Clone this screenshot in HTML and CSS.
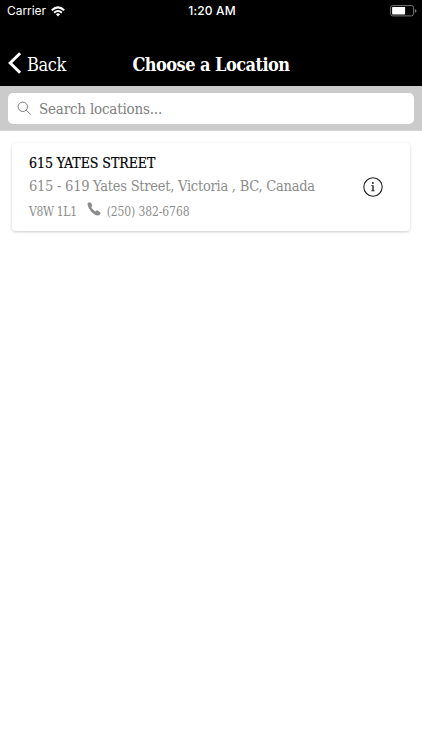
FILE: index.html
```html
<!DOCTYPE html>
<html lang="en">
<head>
<meta charset="utf-8">
<title>Choose a Location</title>
<link rel="stylesheet" href="styles.css">
</head>
<body>
<header class="header">
  <div class="status">
    <div class="carrier"><span>Carrier</span>
      <svg class="wifi" width="14" height="11" viewBox="0 0 14 11" fill="none" stroke="#fff" stroke-width="2"><path d="M.8 4.2Q7-1.5 13.2 4.2M3.1 6.7Q7 3.2 10.9 6.7"/><path d="M4.9 8.2Q7 6.5 9.1 8.2L7 10.4Z" fill="#fff" stroke="none"/></svg>
    </div>
    <time class="clock">1:20 AM</time>
    <svg class="battery" width="27" height="12" viewBox="0 0 27 12"><rect x=".6" y=".6" width="23" height="10.3" rx="2.2" fill="none" stroke="#777"/><rect x="2.1" y="2" width="13" height="7.4" rx=".6" fill="#fff"/><path d="M24.9 3.9Q26.5 4.3 26.5 5.8T24.9 7.7Z" fill="#777"/></svg>
  </div>
  <nav class="nav">
    <a class="back"><svg width="14" height="22" viewBox="0 0 14 22" fill="none" stroke="#fff" stroke-width="3"><path d="M12.1 1.2L2.2 11L12.1 20.8"/></svg><span class="back-label">Back</span></a>
    <h1 class="title">Choose a Location</h1>
  </nav>
</header>
<div class="search-bar">
  <div class="search">
    <svg width="15" height="15" viewBox="0 0 15 15" fill="none" stroke="#808080" stroke-width="1"><circle cx="5.8" cy="5.8" r="4.7"/><path d="M9.2 9.2L13.7 13.5"/></svg>
    <span class="placeholder">Search locations...</span>
  </div>
</div>
<main class="locations">
  <article class="card">
    <div class="details">
      <h2 class="name">615 YATES STREET</h2>
      <p class="address">615 - 619 Yates Street, Victoria , BC, Canada</p>
      <div class="contact"><span class="postal">V8W 1L1</span>
        <svg class="phone" width="14" height="14" viewBox="0 0 14 14"><path d="M.5 2.3Q.3 1 1.5.6L2.6.3Q3.5.3 4 1.1L5.2 3Q5.6 3.9 4.7 4.6Q4.1 5.1 4.5 5.8Q5.8 7.8 7.7 9.1Q8.5 9.7 9 9Q9.7 8 10.6 8.5L12.9 9.9Q13.8 10.6 13.5 11.4Q12.9 13.3 11 13.4Q8.1 13.4 4.5 9.9Q.8 6.1.5 2.3Z" fill="#8c8c8c"/></svg>
        <span class="number">(250) 382-6768</span></div>
    </div>
    <svg class="info" width="20" height="20" viewBox="0 0 20 20"><circle cx="10" cy="10" r="9.2" fill="none" stroke="#222" stroke-width="1.1"/><circle cx="9.9" cy="6" r="1" fill="#222"/><path d="M8.2 8.3H10.7V13.6H11.8V14.3H8.2V13.6H9.3V9H8.2Z" fill="#222"/></svg>
  </article>
</main>
</body>
</html>
```
FILE: styles.css
```css
* { box-sizing: border-box; }
body {
  display: flex;
  flex-direction: column;
  min-height: 100vh;
  margin: 0;
  background: #fff;
  font-family: "Roboto Slab", "DejaVu Serif Condensed", "DejaVu Serif", serif;
  font-stretch: condensed;
  white-space: nowrap;
}
h1, h2, p { margin: 0; }
svg { display: block; flex: none; }
.header { height: 86px; background: #000; color: #fff; }
.status {
  display: grid;
  grid-template-columns: 1fr auto 1fr;
  align-items: center;
  height: 22px;
  padding: 0 5px 0 7px;
  font: 12px/22px Inter, sans-serif;
}
.carrier { display: flex; align-items: center; gap: 5px; letter-spacing: -.05px; }
.clock { font-weight: 500; letter-spacing: .15px; }
.battery { justify-self: end; }
.nav {
  display: grid;
  grid-template-columns: 1fr auto 1fr;
  align-items: center;
  height: 42px;
  margin-top: 20px;
  padding: 0 8px;
}
.back { display: flex; align-items: center; gap: 5px; font-size: 18px; letter-spacing: -.4px; }
.back-label { padding-top: 2px; }
.title { padding-top: 2px; font-size: 18px; font-weight: 700; letter-spacing: -.54px; }
.search-bar { height: 45px; padding: 7px 8px; background: #cbcbcb; border-bottom: 1px solid #d5d5d5; }
.search {
  display: flex;
  align-items: center;
  gap: 7px;
  height: 31px;
  padding-left: 9px;
  border-radius: 5px;
  background: #fff;
  color: #808080;
  font-size: 15px;
  letter-spacing: -.19px;
}
.locations { flex: 1; padding: 12px; background: #fff; }
.card {
  display: flex;
  justify-content: space-between;
  align-items: center;
  height: 88px;
  padding: 0 27px 0 17px;
  border-radius: 4px;
  background: #fff;
  box-shadow: 0 1px 3px rgba(0, 0, 0, .2);
}
.details { padding-top: 2px; }
.name { font-size: 14px; line-height: 22px; font-weight: 400; letter-spacing: -.05px; color: #000; -webkit-text-stroke: .2px #000; }
.address { font-size: 14.5px; line-height: 24px; letter-spacing: -.25px; color: #8c8c8c; }
.contact { display: flex; align-items: center; height: 27px; font-size: 12px; letter-spacing: -.1px; color: #8c8c8c; }
.postal, .number { padding-top: 2px; }
.postal { letter-spacing: -.35px; }
.phone { margin: -5px 6px 0 10px; }
.info { margin-bottom: 1px; }
```
